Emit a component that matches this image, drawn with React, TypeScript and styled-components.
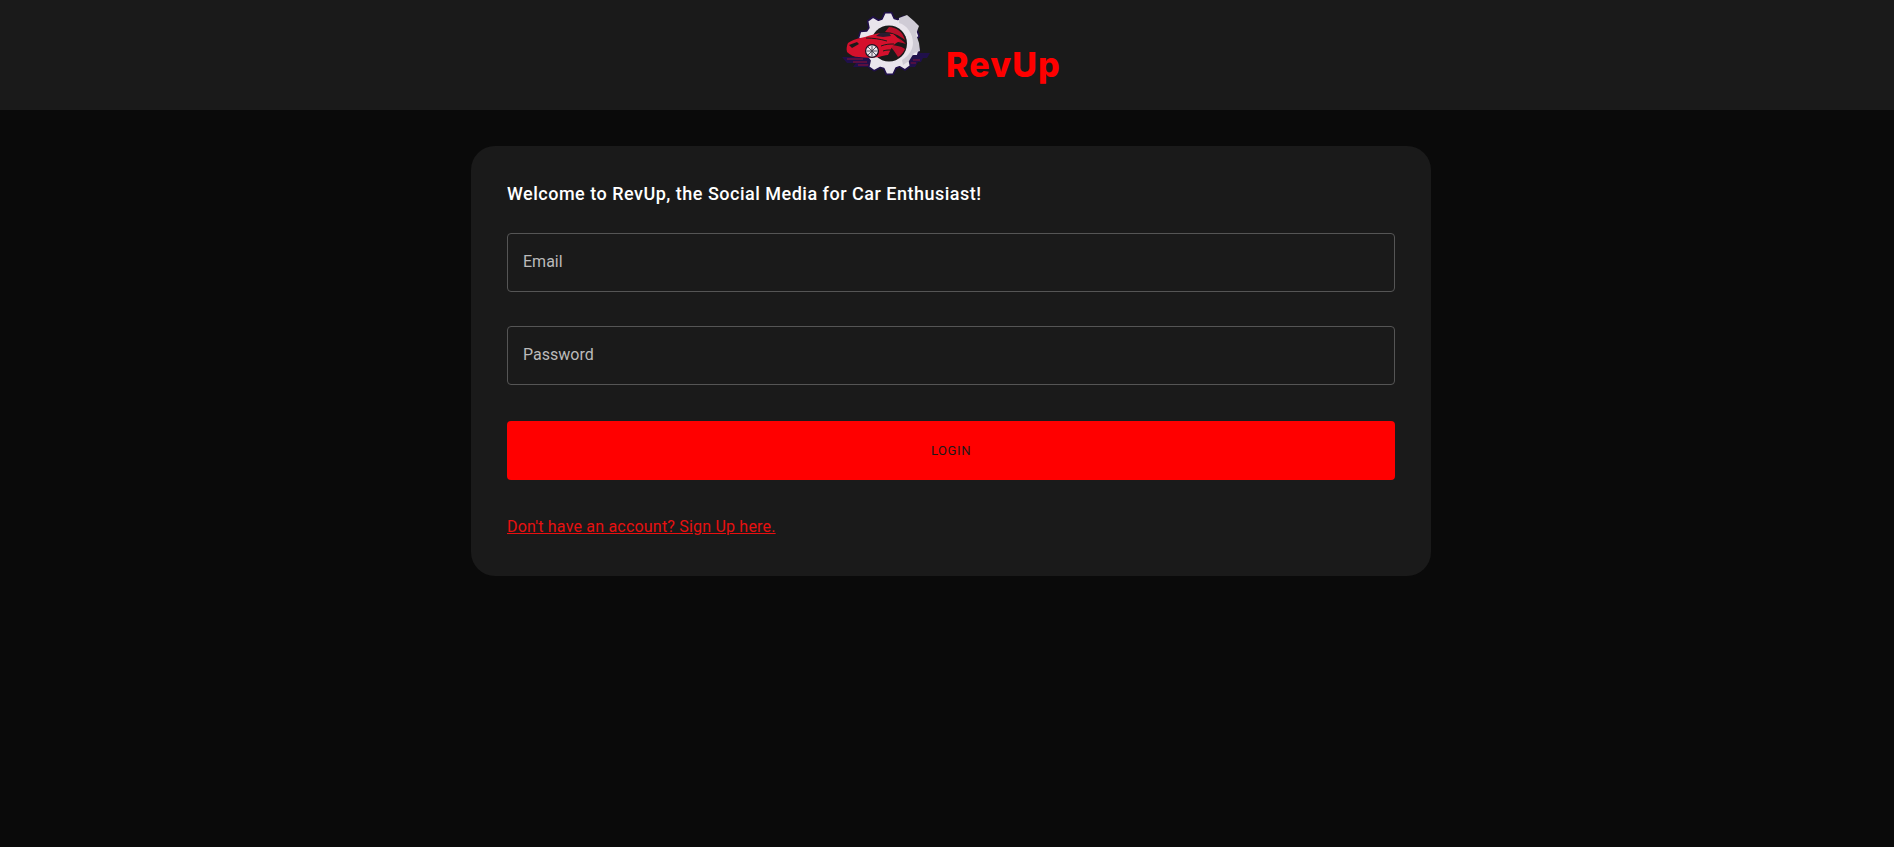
import React from "react";
import styled, {createGlobalStyle} from "styled-components";

const gearPoints = (() => {
  const cx = 50;
  const cy = 38.5;
  const teeth = 10;
  const step = (Math.PI * 2) / teeth;
  const points: string[] = [];
  for (let i = 0; i < teeth; i++) {
    const a = i * step - 0.28;
    [
      [25.5, -0.5],
      [31, -0.27],
      [31, 0.08],
      [25.5, 0.27],
    ].forEach(([r, offset]) => {
      const t = a + offset * step;
      points.push(`${(cx + r * Math.cos(t)).toFixed(1)},${(cy + r * Math.sin(t)).toFixed(1)}`);
    });
  }
  return points.join(" ");
})();

const Logo: React.FC = () => (
  <LogoSvg viewBox="0 0 100 75" aria-label="RevUp logo">
    <path d="M3 52h32l8 10H14l3-4H8z" fill="#20104a" />
    <path d="M72 48h19l-3 5h-4l-2 4h-3l-3 5H60z" fill="#20104a" />
    <path d="M8 54h16M14 57h14M19 60h16" stroke="#b01032" strokeWidth="0.8" fill="none" />
    <path d="M74 55h7M70 58h7" stroke="#b01032" strokeWidth="0.7" fill="none" />
    <polygon points={gearPoints} fill="#e9e5ec" stroke="#20104a" strokeWidth="1.600" strokeLinejoin="round" />
    <path d="M60 13l8-3 7 6 5 5-3 8 3 9 1 8-6 2-5 8-6 4-1-5c7-4 11-11 11-17 0-9-6-18-14-20z" fill="#cfcbd5" />
    <circle cx="50" cy="38.500" r="18" fill="#1a1a1a" />
    <path d="M50 22c7 0 14 5 16 13-6-5-13-8-20-8zM48 31c7 0 14 2 19 8-6-2-12-3-19-3zM50 40c6 0 12 1 16 4-1 2-3 6-7 8-3-5-6-9-9-12z" fill="#b8102a" />
    <path
      d="M8 47c-1-3 0-7 1-9 4-3 11-5 17-6 5-2 10-3 16-4l12 1c3 2 5 4 7 7-5 2-8 5-9 8l-3 6c-3 0-6 1-9 2-6 1-13 1-20 0-5 0-9-2-12-5z"
      fill="#d4102c"
    />
    <path d="M37 31l4-3 9 0 2 3-8 1z" fill="#2a1c30" />
    <path d="M10 40l8-3 2 2-7 4z" fill="#1a1a1a" />
    <path d="M27 33c7 0 14 1 21 3M42 41c5-2 9-2 13-2M44 46c3-1 5-1 8-1" stroke="#1a1a1a" strokeWidth="1" fill="none" />
    <circle cx="33" cy="46" r="7" fill="#1a1224" />
    <circle cx="33" cy="46" r="5.800" fill="#e9e5ec" />
    <path d="M33 40.500v11M27.500 46h11M29 42l8 8M37 42l-8 8" stroke="#4a4652" strokeWidth="0.9" />
    <circle cx="33" cy="46" r="1.300" fill="#4a4652" />
  </LogoSvg>
);

export default function App() {
  return (
    <>
      <GlobalStyle />
      <Header>
        <Logo />
        <Brand>RevUp</Brand>
      </Header>
      <Main>
        <Card>
          <Title>Welcome to RevUp, the Social Media for Car Enthusiast!</Title>
          <Field placeholder="Email" type="email" />
          <Field placeholder="Password" type="password" />
          <LoginButton type="button">Login</LoginButton>
          <SignUpLink href="#">Don't have an account? Sign Up here.</SignUpLink>
        </Card>
      </Main>
    </>
  );
}

const GlobalStyle = createGlobalStyle`
  html, body {
    margin: 0;
    min-height: 100%;
    background: #0a0a0a;
    font-family: "Roboto", "Liberation Sans", sans-serif;
  }

  * {
    box-sizing: border-box;
  }
`;

const Header = styled.header`
  display: flex;
  justify-content: center;
  align-items: flex-start;
  height: 110px;
  padding: 5px 0 0 6px;
  margin-bottom: 36px;
  background: #1a1a1a;
`;

const LogoSvg = styled.svg`
  width: 100px;
  height: 75px;
`;

const Brand = styled.span`
  margin: 40px 0 0 7px;
  color: #ff0000;
  font-family: "Inter", sans-serif;
  font-weight: 800;
  font-size: 34px;
  letter-spacing: 1.1px;
  line-height: 40px;
`;

const Main = styled.main`
  display: flex;
  justify-content: center;
  padding-left: 8px;
`;

const Card = styled.section`
  display: flex;
  flex-direction: column;
  width: 960px;
  height: 430px;
  padding: 36px;
  background: #1a1a1a;
  border-radius: 24px;
`;

const Title = styled.h1`
  height: 22px;
  margin: 0 0 29px;
  color: #ffffff;
  font-size: 18px;
  font-weight: 500;
  letter-spacing: 0.5px;
  line-height: 24px;
`;

const Field = styled.input`
  height: 59px;
  margin: 0 0 34px;
  padding: 0 15px 2px;
  color: #ffffff;
  background: #1a1a1a;
  border: 1px solid #555555;
  border-radius: 4px;
  font-family: inherit;
  font-size: 16px;
  outline: none;

  &::placeholder {
    color: #bbbbbb;
    opacity: 1;
  }
`;

const LoginButton = styled.button`
  height: 59px;
  margin: 2px 0 35px;
  color: #1a1a1a;
  background: #ff0000;
  border: none;
  border-radius: 4px;
  font-family: inherit;
  font-size: 13px;
  font-weight: 400;
  letter-spacing: 0.6px;
  text-transform: uppercase;
`;

const SignUpLink = styled.a`
  align-self: flex-start;
  color: #e81010;
  font-size: 16px;
  letter-spacing: 0.2px;
  line-height: 24px;
  text-decoration: underline;
`;
